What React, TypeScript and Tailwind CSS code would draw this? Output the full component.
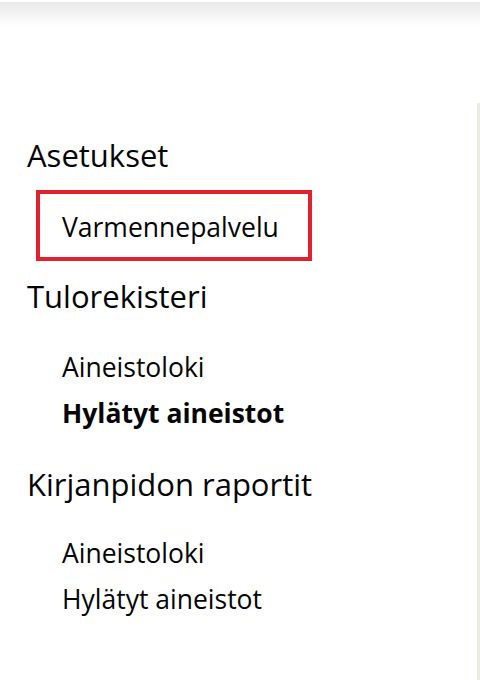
import clsx from "clsx";

type Item = { label: string; active?: boolean; marked?: boolean };
type Section = { title: string; items: Item[]; gap: string };

const sections: Section[] = [
  { title: "Asetukset", gap: "mt-[17px]", items: [{ label: "Varmennepalvelu", marked: true }] },
  {
    title: "Tulorekisteri",
    gap: "mt-[30px]",
    items: [{ label: "Aineistoloki" }, { label: "Hylätyt aineistot", active: true }],
  },
  {
    title: "Kirjanpidon raportit",
    gap: "mt-[28px]",
    items: [{ label: "Aineistoloki" }, { label: "Hylätyt aineistot" }],
  },
];

function NavItem({ item }: { item: Item }) {
  if (item.marked) {
    // highlighted entry gets a red frame around it
    return (
      <li className="ml-[9px] h-[71px] w-[276px] border-4 border-[#e3202e] pl-[22px] pt-[10px]">
        <a className="block text-[26.5px] leading-[46px]">{item.label}</a>
      </li>
    );
  }
  return (
    <li className="ml-[35px]">
      <a className={clsx("block text-[26.5px] leading-[46px]", item.active && "font-bold")}>
        {item.label}
      </a>
    </li>
  );
}

export default function App() {
  return (
    <div
      className="flex h-[680px] w-[480px] flex-col overflow-hidden bg-white text-[#050505]"
      style={{ fontFamily: '"Open Sans", sans-serif' }}
    >
      {/* header shadow */}
      <div className="mt-[2px] h-[24px] shrink-0 bg-gradient-to-b from-[#e9e9e9] to-white" />

      <div className="flex flex-1">
        <nav className="flex-1 pl-[27px] pt-[111px]">
          {sections.map((s, i) => (
            <section
              key={s.title}
              className={clsx(i === 1 && "mt-[17px]", i === 2 && "mt-[30px]")}
            >
              <h2 className="text-[31px] leading-[36px]">{s.title}</h2>
              <ul className={s.gap}>
                {s.items.map((item, j) => (
                  <NavItem key={j} item={item} />
                ))}
              </ul>
            </section>
          ))}
        </nav>
        <aside className="mt-[77px] w-[3px] bg-[#eeeae4]" />
      </div>
    </div>
  );
}
